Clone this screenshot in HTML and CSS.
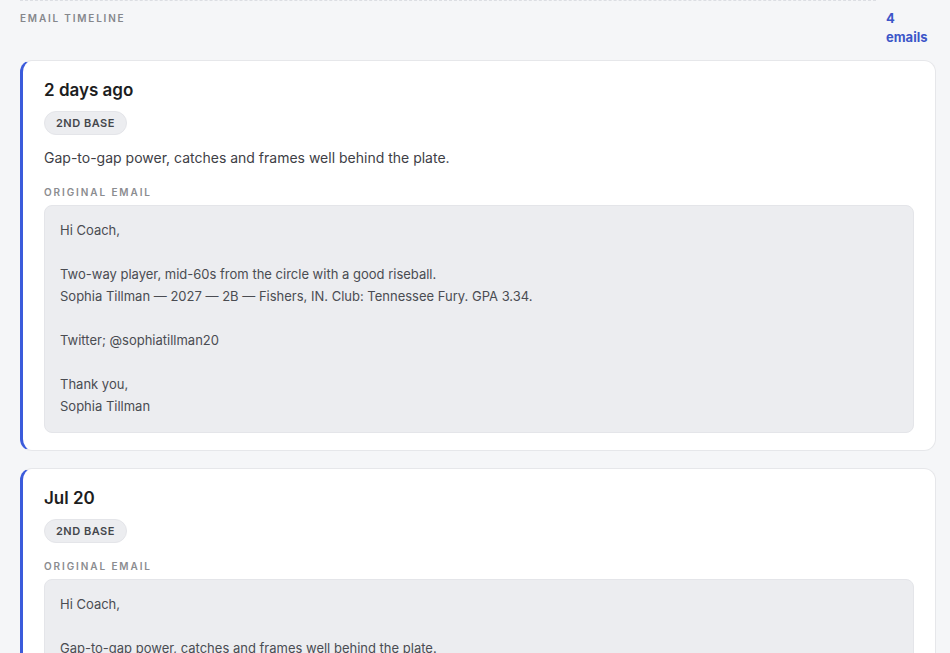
FILE: index.html
```html
<!DOCTYPE html>
<html lang="en">
<head>
<meta charset="utf-8">
<title>Email timeline</title>
<link rel="stylesheet" href="styles.css">
</head>
<body>
<div class="page">
  <div class="timeline-head">
    <div class="head-label">EMAIL TIMELINE</div>
    <div class="head-count">4 emails</div>
  </div>
  <div class="cards">
    <article class="card">
      <h3 class="card-title">2 days ago</h3>
      <span class="badge">2ND BASE</span>
      <p class="summary">Gap-to-gap power, catches and frames well behind the plate.</p>
      <div class="section-label">ORIGINAL EMAIL</div>
      <div class="email-body">
        <p>Hi Coach,</p>
        <p>Two-way player, mid-60s from the circle with a good riseball.<br>Sophia Tillman — 2027 — 2B — Fishers, IN. Club: Tennessee Fury. GPA 3.34.</p>
        <p>Twitter; @sophiatillman20</p>
        <p>Thank you,<br>Sophia Tillman</p>
      </div>
    </article>
    <article class="card">
      <h3 class="card-title">Jul 20</h3>
      <span class="badge">2ND BASE</span>
      <div class="section-label">ORIGINAL EMAIL</div>
      <div class="email-body">
        <p>Hi Coach,</p>
        <p>Gap-to-gap power, catches and frames well behind the plate.<br>Sophia Tillman — 2027 — 2B — Fishers, IN. Club: Tennessee Fury. GPA 3.34.</p>
        <p>Twitter; @sophiatillman20</p>
        <p>Thank you,<br>Sophia Tillman</p>
      </div>
    </article>
  </div>
</div>
</body>
</html>
```
FILE: styles.css
```css
* { box-sizing: border-box; }
html, body { margin: 0; padding: 0; }
body {
  background: #f5f6f8;
  font-family: Inter, "Noto Sans", "Liberation Sans", sans-serif;
  color: #1f2126;
  height: 653px;
  overflow: hidden;
}
.page {
  padding: 0 14px 0 20px;
}
.timeline-head {
  display: flex;
  gap: 10px;
  align-items: flex-start;
}
.head-label {
  flex: 1;
  border-top: 1px dashed #dcdee3;
  padding-top: 11px;
  font-size: 10px;
  font-weight: 600;
  letter-spacing: 1.8px;
  color: #85878c;
}
.head-count {
  width: 50px;
  padding-top: 9px;
  font-size: 13px;
  font-weight: 700;
  line-height: 19px;
  color: #3d56c9;
}
.cards {
  margin-top: 13px;
  display: flex;
  flex-direction: column;
  gap: 17px;
}
.card {
  background: #fff;
  border: 1px solid #e6e7ea;
  border-left: 3px solid #3b5bdb;
  border-radius: 12px;
  padding: 18px 21px 17px;
  display: flex;
  flex-direction: column;
  align-items: flex-start;
}
.card-title {
  margin: 0;
  font-size: 17px;
  font-weight: 600;
  line-height: 22px;
  color: #1c1d21;
}
.badge {
  margin-top: 10px;
  display: inline-block;
  padding: 0 11px;
  height: 24px;
  line-height: 22px;
  border: 1px solid #e4e5e9;
  border-radius: 12px;
  background: #ecedf0;
  font-size: 11px;
  font-weight: 600;
  letter-spacing: 0.5px;
  color: #45474c;
}
.summary {
  margin: 13px 0 0;
  font-size: 14px;
  line-height: 20px;
  color: #3e4046;
}
.section-label {
  margin-top: 17px;
  font-size: 10px;
  font-weight: 600;
  letter-spacing: 1.9px;
  color: #8b8c90;
  line-height: 13px;
}
.summary + .section-label { margin-top: 18px; }
.email-body {
  align-self: stretch;
  margin-top: 6px;
  background: #ecedf0;
  border: 1px solid #e4e5e9;
  border-radius: 8px;
  padding: 13px 15px 15px;
  font-size: 13px;
  line-height: 22px;
  color: #4a4c52;
}
.email-body p {
  margin: 0 0 22px;
}
.email-body p:last-child { margin-bottom: 0; }
```
